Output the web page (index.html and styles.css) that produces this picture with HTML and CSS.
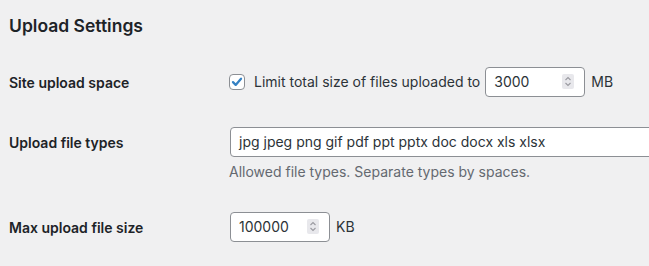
FILE: index.html
```html
<!DOCTYPE html>
<html lang="en">
<head>
    <meta charset="UTF-8">
    <meta name="viewport" content="width=device-width, initial-scale=1.0">
    <title>Upload Settings</title>
    <link rel="stylesheet" href="styles.css">
</head>
<body>
    <div class="wrap">
        <h2 class="title">Upload Settings</h2>

        <div class="form-row">
            <div class="row-label">Site upload space</div>
            <div class="row-field">
                <div class="inline-field">
                    <span class="checkbox">
                        <svg viewBox="0 0 16 16" width="16" height="16">
                            <path d="M3.4 8.2 L6.5 11.3 L12.6 4.2" fill="none" stroke="#3582c4" stroke-width="2.6" stroke-linecap="round" stroke-linejoin="round"/>
                        </svg>
                    </span>
                    <span class="inline-text">Limit total size of files uploaded to</span>
                    <div class="number-input">
                        <span class="value">3000</span>
                        <span class="spinner">
                            <svg viewBox="0 0 12 15" width="12" height="15">
                                <path d="M3.5 6 L6 3.5 L8.5 6" fill="none" stroke="#9a9aa0" stroke-width="1.1"/>
                                <path d="M3.5 9 L6 11.5 L8.5 9" fill="none" stroke="#9a9aa0" stroke-width="1.1"/>
                            </svg>
                        </span>
                    </div>
                    <span class="unit">MB</span>
                </div>
            </div>
        </div>

        <div class="form-row">
            <div class="row-label">Upload file types</div>
            <div class="row-field">
                <div class="text-input">jpg jpeg png gif pdf ppt pptx doc docx xls xlsx</div>
                <p class="description">Allowed file types. Separate types by spaces.</p>
            </div>
        </div>

        <div class="form-row">
            <div class="row-label">Max upload file size</div>
            <div class="row-field">
                <div class="inline-field">
                    <div class="number-input">
                        <span class="value">100000</span>
                        <span class="spinner">
                            <svg viewBox="0 0 12 15" width="12" height="15">
                                <path d="M3.5 6 L6 3.5 L8.5 6" fill="none" stroke="#9a9aa0" stroke-width="1.1"/>
                                <path d="M3.5 9 L6 11.5 L8.5 9" fill="none" stroke="#9a9aa0" stroke-width="1.1"/>
                            </svg>
                        </span>
                    </div>
                    <span class="unit">KB</span>
                </div>
            </div>
        </div>
    </div>
</body>
</html>
```

FILE: styles.css
```css
html, body {
    overflow: hidden;
}

body {
    margin: 0;
    padding: 0;
    background: #f0f0f1;
    color: #1d2327;
    font-family: Inter, "Noto Sans", sans-serif;
    font-size: 14px;
}

.wrap {
    padding-left: 9px;
    overflow: hidden;
}

.title {
    font-size: 17.5px;
    font-weight: 600;
    line-height: 1.3;
    margin: 15px 0 14px;
    color: #1d2327;
}

.form-row {
    display: flex;
    align-items: flex-start;
}

.row-label {
    width: 200px;
    flex-shrink: 0;
    padding: 22px 10px 18px 0;
    font-weight: 600;
    line-height: 1.3;
}

.row-field {
    padding: 15px 10px;
    flex: 1;
    min-width: 0;
    overflow: hidden;
}

.inline-field {
    display: flex;
    align-items: center;
    height: 30px;
    white-space: nowrap;
}

.checkbox {
    width: 16px;
    height: 16px;
    box-sizing: border-box;
    border: 1px solid #8c8f94;
    border-radius: 4px;
    background: #fff;
    display: flex;
    align-items: center;
    justify-content: center;
    margin-right: 9px;
}

.checkbox svg {
    width: 14px;
    height: 14px;
}

.inline-text {
    color: #2c3338;
    margin-right: 4px;
}

.number-input {
    width: 100px;
    height: 30px;
    box-sizing: border-box;
    margin: 0 1px;
    border: 1px solid #8c8f94;
    border-radius: 4px;
    background: #fff;
    display: flex;
    align-items: center;
    justify-content: space-between;
    padding: 0 10px 0 8px;
    color: #2c3338;
}

.spinner {
    width: 12px;
    height: 15px;
    background: #e8e8ec;
    border-radius: 2px;
    display: flex;
}

.unit {
    margin-left: 5px;
    color: #2c3338;
}

.text-input {
    width: 560px;
    height: 30px;
    box-sizing: border-box;
    margin: 0 1px;
    border: 1px solid #8c8f94;
    border-radius: 4px;
    background: #fff;
    padding: 0 8px;
    line-height: 28px;
    color: #2c3338;
    white-space: nowrap;
}

.description {
    margin: 4px 0 0;
    line-height: 1.5;
    color: #646970;
}
```
